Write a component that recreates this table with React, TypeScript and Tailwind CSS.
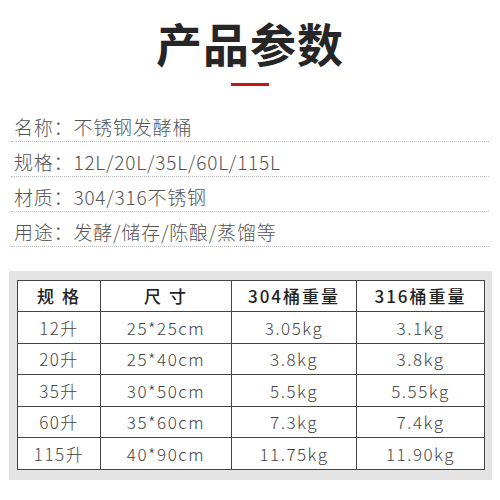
const INFO = [
  { label: '名称', value: '不锈钢发酵桶' },
  { label: '规格', value: '12L/20L/35L/60L/115L' },
  { label: '材质', value: '304/316不锈钢' },
  { label: '用途', value: '发酵/储存/陈酿/蒸馏等' },
];

const HEADERS = ['规 格', '尺 寸', '304桶重量', '316桶重量'];

const ROWS = [
  ['12升', '25*25cm', '3.05kg', '3.1kg'],
  ['20升', '25*40cm', '3.8kg', '3.8kg'],
  ['35升', '30*50cm', '5.5kg', '5.55kg'],
  ['60升', '35*60cm', '7.3kg', '7.4kg'],
  ['115升', '40*90cm', '11.75kg', '11.90kg'],
];

const COL_WIDTHS = ['w-[83px]', 'w-[131px]', 'w-[125px]', 'w-[128px]'];

export default function App() {
  return (
    <div className="w-[500px] h-[500px] bg-white overflow-hidden font-['Noto_Sans_CJK_SC','Noto_Sans',sans-serif]">
      {/* Title */}
      <div className="flex flex-col items-center pt-[12px]">
        <h1 className="text-[46px] leading-[60px] font-bold text-[#262626] tracking-[1px]">产品参数</h1>
        <div className="mt-[11px] w-[38px] h-[3px] bg-[#c8141a]" />
      </div>

      {/* Spec list */}
      <div className="mx-[11px] mt-[21px]">
        {INFO.map((item) => (
          <div
            key={item.label}
            className="pl-[3px] pt-[6px] pb-px leading-[27px] text-[19px] font-light text-[#555] tracking-[0.8px] border-b border-dotted border-[#bdbdbd]"
          >
            {item.label}：{item.value}
          </div>
        ))}
      </div>

      {/* Table */}
      <div className="mx-[9px] mt-[24px] w-[483px] bg-[#e4e4e4] pt-[9px] pb-[10px] pl-[8px]">
        <table className="border-collapse bg-white table-fixed">
          <thead>
            <tr>
              {HEADERS.map((h, i) => (
                <th
                  key={h}
                  className={`${COL_WIDTHS[i]} h-[31px] p-0 border border-[#444] text-[17px] font-medium text-[#222] tracking-[2px] text-center`}
                >
                  {h}
                </th>
              ))}
            </tr>
          </thead>
          <tbody>
            {ROWS.map((row) => (
              <tr key={row[0]}>
                {row.map((cell, i) => (
                  <td
                    key={i}
                    className={`${COL_WIDTHS[i]} h-[31.6px] p-0 border border-[#444] text-[17px] font-light text-[#444] tracking-[1.5px] text-center`}
                  >
                    {cell}
                  </td>
                ))}
              </tr>
            ))}
          </tbody>
        </table>
      </div>
    </div>
  );
}
